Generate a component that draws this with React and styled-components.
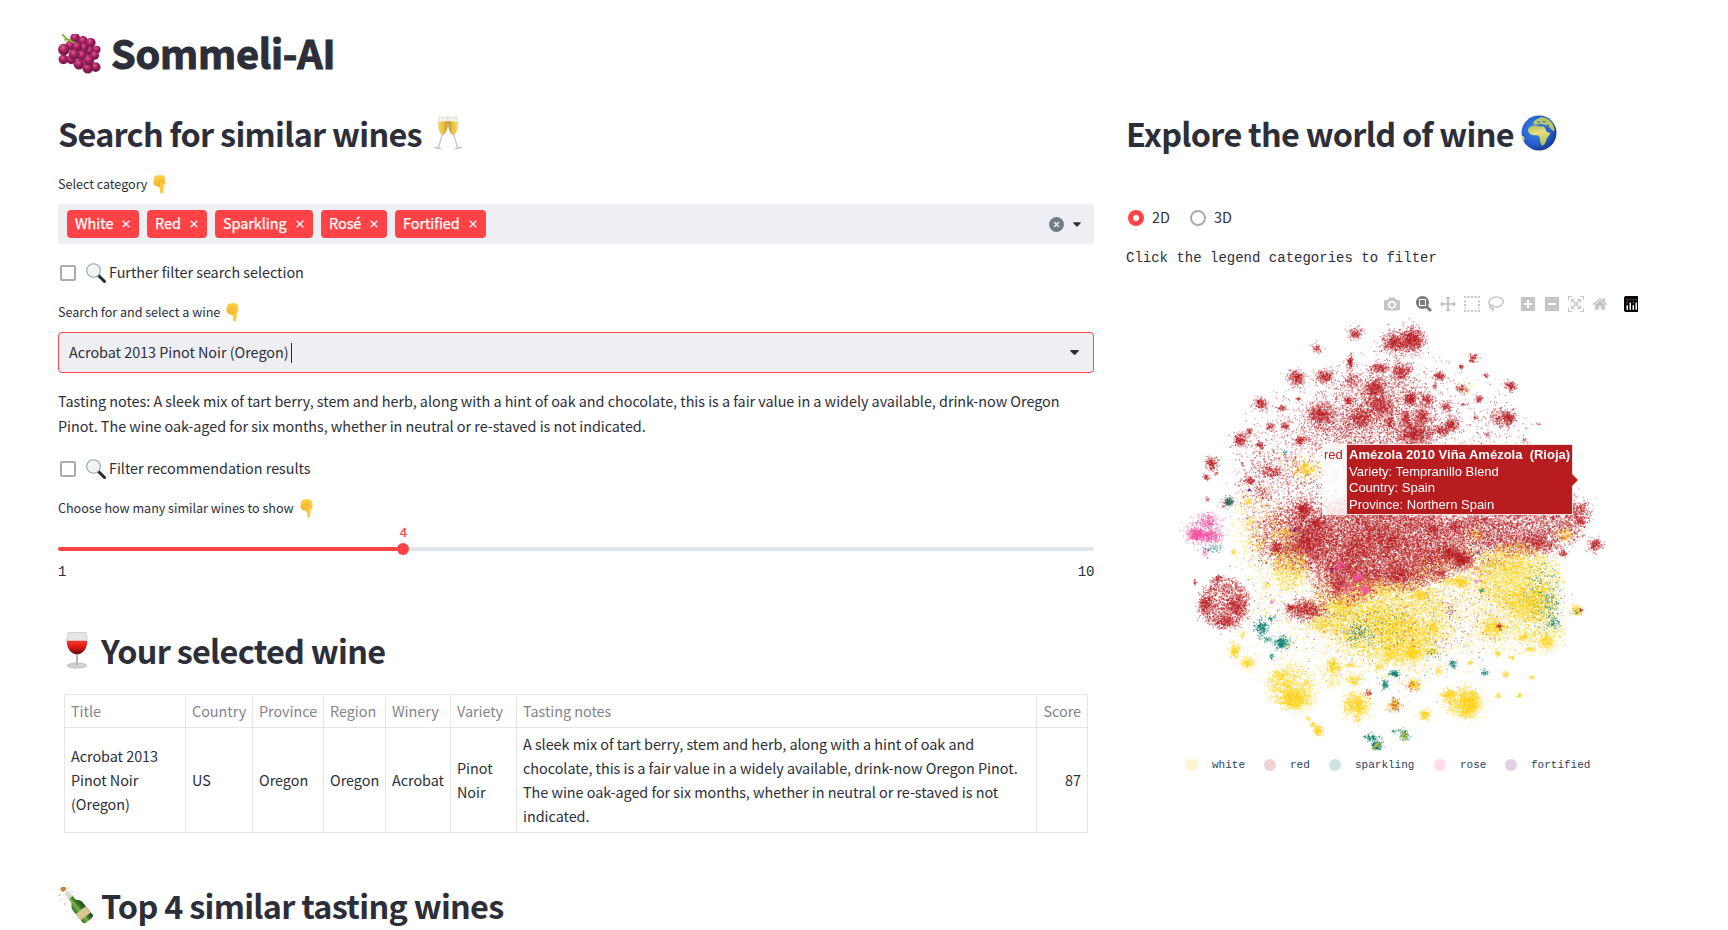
import React, { useEffect, useRef } from "react";
import styled, { createGlobalStyle } from "styled-components";

const sans = `"Noto Sans CJK SC", "Noto Sans", sans-serif`;
const mono = `"Liberation Mono", monospace`;
const ink = "#2c2e39";
const accent = "#ff4346";
const field = "#eeeff4";

const Global = createGlobalStyle`
  * { box-sizing: border-box; }
  body { margin: 0; background: #fff; color: ${ink}; font-family: ${sans}; font-size: 14.4px; line-height: 24px; letter-spacing: -0.03px; overflow: hidden; }
`;

const Page = styled.main`
  width: 1728px;
  height: 930px;
  overflow: hidden;
  padding: 25px 84px 0 58px;
`;
const Columns = styled.div`
  display: grid;
  grid-template-columns: 1036px 518px;
  column-gap: 32px;
  margin-top: 31px;
`;
const Column = styled.section`
  display: flex;
  flex-direction: column;
  min-width: 0;
`;
const Title = styled.h1`
  margin: 0;
  height: 53px;
  display: flex;
  align-items: center;
  gap: 8px;
  font-size: 39.6px;
  line-height: 53px;
  font-weight: 700;
  letter-spacing: -0.2px;
  -webkit-text-stroke: 1.1px ${ink};
  white-space: nowrap;

  svg {
    margin-top: 4px;
  }
`;
const Heading = styled.h2`
  margin: ${(p) => p.$top || 0}px 0 0;
  padding-left: ${(p) => p.$indent || 0}px;
  height: 48px;
  display: flex;
  align-items: center;
  gap: ${(p) => p.$gap || 8}px;
  font-size: 32.4px;
  line-height: 48px;
  font-weight: 700;
  letter-spacing: -0.72px;
  white-space: nowrap;
`;
const Label = styled.label`
  margin: 17px 0 ${(p) => p.$bottom ?? 10}px;
  height: 20px;
  line-height: 20px;
  font-size: 12.6px;
  display: flex;
  align-items: center;
  gap: 6px;
`;
const MultiSelect = styled.div`
  height: 40px;
  border-radius: 4px;
  background: ${field};
  display: flex;
  align-items: center;
  gap: 8px;
  padding: 0 13px 0 9px;
`;
const Tag = styled.span`
  height: 28px;
  width: ${(p) => p.$w}px;
  padding: 0 9px 0 8px;
  border-radius: 4px;
  background: ${accent};
  color: #fff;
  display: flex;
  align-items: center;
  justify-content: space-between;
  line-height: 26px;
  -webkit-text-stroke: 0.25px #fff;
`;
const TagText = styled.span`
  height: 28px;
`;
const FieldActions = styled.span`
  margin-left: auto;
  display: flex;
  align-items: center;
  gap: 9px;
`;
const CheckRow = styled.label`
  margin-top: ${(p) => p.$top}px;
  height: 24px;
  line-height: 22px;
  padding-left: 2px;
  display: flex;
  align-items: center;
`;
const Box = styled.span`
  width: 16px;
  height: 16px;
  border: 2px solid #a9abb0;
  border-radius: 2px;
  margin-right: 10px;
`;
const CheckText = styled.span`
  margin-left: 3px;
  height: 24px;
`;
const Select = styled.div`
  height: 41px;
  border: 1px solid ${accent};
  border-radius: 4px;
  background: ${field};
  display: flex;
  align-items: center;
  padding: 0 14px 0 10px;
`;
const SelectText = styled.span`
  height: 24px;
  line-height: 22px;
`;
const Cursor = styled.span`
  width: 1px;
  height: 20px;
  margin-left: 2px;
  background: ${ink};
`;
const Notes = styled.p`
  margin: 15px 0 0;
  line-height: 25px;
  width: 1020px;
`;
const Slider = styled.div`
  margin-top: 7px;
  display: flex;
  flex-direction: column;
`;
const SliderValue = styled.div`
  width: 691px;
  height: 18px;
  line-height: 17px;
  text-align: center;
  color: ${accent};
  font-family: ${mono};
  font-size: 13px;
  -webkit-text-stroke: 0.3px ${accent};
`;
const Track = styled.div`
  height: 12px;
  display: flex;
  align-items: center;
`;
const Filled = styled.span`
  width: 339px;
  height: 4px;
  border-radius: 4px 0 0 4px;
  background: ${accent};
`;
const Thumb = styled.span`
  width: 12px;
  height: 12px;
  border-radius: 50%;
  background: ${accent};
`;
const Rest = styled.span`
  flex: 1;
  height: 4px;
  border-radius: 0 4px 4px 0;
  background: #e1e5ed;
`;
const Ticks = styled.div`
  margin: 9px 0 -1px;
  height: 16px;
  line-height: 16px;
  display: flex;
  justify-content: space-between;
  font-family: ${mono};
  font-size: 14px;
  letter-spacing: -0.3px;
`;
const Table = styled.table`
  margin: 20px 0 0 6px;
  width: 1023px;
  border-collapse: collapse;
  table-layout: fixed;
  line-height: 24px;
`;
const Cell = styled.td`
  border: 1px solid #e6e6e9;
  padding: 4px 6px;
  text-align: ${(p) => (p.$right ? "right" : "left")};
  font-weight: 400;
  color: ${(p) => (p.$head ? "#83848c" : ink)};
  white-space: ${(p) => (p.$head ? "nowrap" : "normal")};
`;
const Radios = styled.div`
  margin-top: 49px;
  padding-left: 2px;
  height: 24px;
  display: flex;
  align-items: center;
`;
const Radio = styled.span`
  width: 16px;
  height: 16px;
  border-radius: 50%;
  border: ${(p) => (p.$on ? `5px solid ${accent}` : "2px solid #a9abb0")};
  background: #fff;
`;
const RadioText = styled.span`
  width: 38px;
  padding-left: 8px;
  margin-right: 8px;
  height: 24px;
  line-height: 22px;
`;
const Hint = styled.div`
  margin-top: 18px;
  height: 20px;
  line-height: 20px;
  font-family: ${mono};
  font-size: 14px;
  letter-spacing: 0;
  white-space: pre;
`;
const Plot = styled.div`
  position: relative;
  margin-top: 28px;
  display: flex;
  flex-direction: column;
`;
const ModeBar = styled.div`
  height: 16px;
  margin-right: 6px;
  display: flex;
  justify-content: flex-end;
  align-items: center;
  gap: 16px;
`;
const ModeGroup = styled.div`
  display: flex;
  align-items: center;
  gap: 8px;
`;
const Cloud = styled.canvas`
  width: 460px;
  height: 446px;
  margin: -2px 0 0 34px;
`;
const Hover = styled.div`
  position: absolute;
  left: 196px;
  top: 148px;
  height: 71px;
  display: flex;
  letter-spacing: 0;
  font: 13px/16.7px "Liberation Sans", Arial, sans-serif;
`;
const HoverName = styled.span`
  width: 24px;
  padding: 3px 0 0 2px;
  background: rgba(255, 255, 255, 0.8);
  color: #b71c1c;
  white-space: nowrap;
`;
const HoverBody = styled.div`
  width: 227px;
  border: 1px solid #f6dede;
  background: #b71c1f;
  color: #fff;
  padding: 2px 0 0 2px;
  white-space: pre;
`;
const HoverArrow = styled.span`
  align-self: center;
  margin-left: -1px;
  border: 6px solid transparent;
  border-left-color: #b71c1f;
  border-right: 0;
`;
const Legend = styled.div`
  display: flex;
  align-items: center;
  height: 16px;
  margin: 1px 0 0 60px;
  letter-spacing: 0;
  font: 11px/18px "Liberation Mono", "Courier New", monospace;
  color: #2a3f5f;
`;
const LegendItem = styled.span`
  width: ${(p) => p.$w}px;
  display: flex;
  align-items: center;
  gap: 14px;
  &::before {
    content: "";
    width: 12px;
    height: 12px;
    border-radius: 50%;
    background: ${(p) => p.$c};
  }
`;

const Cross = () => (
  <svg width="8" height="8" viewBox="0 0 8 8"><path d="M.7.7l6.6 6.6M7.3.7L.7 7.3" stroke="#fff" strokeWidth="1.25" /></svg>
);
const Caret = ({ w }) => (
  <svg width={w} height="5" viewBox="0 0 9 5"><path d="M.3 0h8.4v.9L5.2 4.7H3.8L.3.9z" fill={ink} /></svg>
);
const Clear = () => (
  <svg width="15" height="15" viewBox="0 0 15 15"><circle cx="7.5" cy="7.5" r="7.4" fill="#747986" /><path d="M5 5l5 5M10 5l-5 5" stroke="#f0f2f6" strokeWidth="1.4" /></svg>
);

const grapes = [[17, 4, 5], [25, 7, 5], [33, 9, 5], [5, 26, 5], [12, 12, 5], [32, 17, 5], [39, 16, 4], [26, 14, 5], [19, 13, 5], [13, 26, 5], [5.5, 16, 6], [24, 22, 5.5], [37, 22, 4.5], [16, 21, 5.5], [21, 31, 5.5], [38, 34, 5], [30, 35, 5.5], [31, 27, 5.5]];
const Grapes = () => (
  <svg width="45" height="40" viewBox="0 0 45 41">
    <defs><radialGradient id="grape" cx=".4" cy=".32"><stop offset="0" stopColor="#dc5f97" /><stop offset=".5" stopColor="#b42867" /><stop offset="1" stopColor="#7d194b" /></radialGradient></defs>
    {grapes.map(([x, y, r], i) => <circle key={i} cx={x} cy={y} r={r} fill="url(#grape)" />)}
    <path d="M4 0c2 4 5 6.500 13 9M6 6.500c3-2 6-1 9 2" fill="none" stroke="#7fae35" strokeWidth="1.800" />
  </svg>
);
const Flutes = () => (
  <svg width="30" height="34" viewBox="0 0 30 34">
    <defs><linearGradient id="fizz" x2="1"><stop offset="0" stopColor="#f4d968" /><stop offset=".55" stopColor="#e9c23c" /><stop offset="1" stopColor="#ba932e" /></linearGradient></defs>
    {["", "matrix(-1 0 0 1 30 0)"].map((t) => (
      <g key={t} transform={t}>
        <path d="M6 .8l8.700.8c.7 8-.5 15.500-5 17.800C5.200 17 4.200 9 6 .8z" fill="#f1f2ea" stroke="#c9c9bd" strokeWidth=".5" />
        <path d="M5.500 6l9.200-1c.2 7-1.300 12.500-5 14C6 17 4.700 12 5.500 6z" fill="url(#fizz)" />
        <path d="M9.300 18.500L5.500 31.500" stroke="#bfc4c6" strokeWidth="1.200" />
        <path d="M.6 31.500c3-.8 6-.4 9 1.200-3 .7-6.500.4-9-1.200z" fill="#c3c8ca" />
      </g>
    ))}
  </svg>
);
const Hand = () => (
  <svg width="13" height="19" viewBox="0 0 13 19">
    <path d="M2.300 1.200C4 .2 8.500 0 10.300.8c1.200.7 1.900 2.600 2.100 5 .2 2-.3 3.600-1.500 4.400-.2 2.600-.5 5.300-.9 7.300-.3 1.400-2.400 1.400-2.700 0L6.500 11.800c-.8.7-2 .5-2.400-.5-1 .5-2.100 0-2.300-1.200C.7 9.600.3 8.500.6 7.300.2 5.200 1 2.300 2.300 1.200z" fill="#ffc83d" />
    <path d="M2.200 6.300c-.6 1-.6 2.500-.2 3.600M4.300 6.800c-.5 1.300-.6 2.800-.2 4.300M6.600 7.200c-.4 1.400-.4 3-.1 4.400M5 5.500c2-.6 4-.2 4.700 1.700" fill="none" stroke="#e09a24" strokeWidth=".7" />
  </svg>
);
const Lens = () => (
  <svg width="20" height="20" viewBox="0 0 20 20">
    <path d="M12 12l6.500 6.500" stroke="#292b2d" strokeWidth="3" strokeLinecap="round" />
    <circle cx="7.500" cy="7.500" r="6.800" fill="#f1f4f5" stroke="#95a2a8" strokeWidth="1.100" />
    <path d="M3.500 7a4 4 0 0 1 4-4" stroke="#fff" strokeWidth="1.500" fill="none" />
  </svg>
);
const Glass = () => (
  <svg width="22" height="37" viewBox="0 0 22 37">
    <defs><linearGradient id="wine" x2="0" y2="1"><stop offset="0" stopColor="#f2382a" /><stop offset=".45" stopColor="#dd1a14" /><stop offset=".8" stopColor="#8d0f0e" /><stop offset="1" stopColor="#5a0c0c" /></linearGradient></defs>
    <ellipse cx="11" cy="33.500" rx="9.800" ry="2.600" fill="#d2d2d2" stroke="#a5a5a5" strokeWidth=".6" />
    <path d="M11 21v12" stroke="#bdb5b5" strokeWidth="2" />
    <path d="M2 .6h18c1.500 6 2 12-1.500 17-2 3-4.500 5-7.500 5s-5.500-2-7.500-5C0 12.500.500 6.500 2 .6z" fill="#e6e6e6" stroke="#bcbcbc" strokeWidth=".6" />
    <path d="M.9 8.800h20.200c.1 8-4.100 13.500-10.100 13.500S.8 16.800.9 8.800z" fill="url(#wine)" />
  </svg>
);
const Bottle = () => (
  <svg width="36" height="36" viewBox="0 0 36 36">
    <defs><linearGradient id="green" x2="1"><stop offset="0" stopColor="#2e6b1f" /><stop offset=".4" stopColor="#7fb34a" /><stop offset=".6" stopColor="#3b7a28" /><stop offset="1" stopColor="#1f4a18" /></linearGradient></defs>
    <g transform="rotate(-39 18 18)">
      <path d="M16 8h5v4c0 3 3.800 4 3.800 8v16.500c0 2.500-12.600 2.500-12.600 0V20c0-4 3.800-5 3.800-8z" fill="url(#green)" />
      <path d="M16 2h5v7h-5z" fill="#ddd9c8" />
      <path d="M12.200 25h12.600v8H12.200z" fill="#dcc493" />
      <rect x="15.500" y="-5" width="5.500" height="5" rx="2" fill="#c68448" />
    </g>
    <g fill="#cdbb91"><circle cx="1.500" cy="8" r=".9" /><circle cx="4" cy="12" r=".7" /><circle cx="7" cy="17" r=".9" /><circle cx="10" cy="1" r=".7" /><circle cx="14" cy="5" r=".8" /><circle cx="2" cy="14" r=".6" /></g>
  </svg>
);
const Globe = () => (
  <svg width="36" height="36" viewBox="0 0 36 36">
    <defs>
      <radialGradient id="sea" cx=".4" cy=".4" r=".62"><stop offset="0" stopColor="#3f86e8" /><stop offset=".65" stopColor="#2561d0" /><stop offset="1" stopColor="#173c93" /></radialGradient>
      <linearGradient id="land" x2=".3" y2="1"><stop offset="0" stopColor="#a5bd55" /><stop offset=".45" stopColor="#e6df83" /><stop offset="1" stopColor="#b9c553" /></linearGradient>
    </defs>
    <circle cx="18" cy="18" r="17.500" fill="url(#sea)" />
    <path d="M7 15c.5-3 4-5 8-4.500 1.500 1 4.500 1.300 8 1l2.800 5.500 3.500 1c-.6 2.500-3.500 4.500-4 6.700-.5 3-2.500 6-4.300 5.800-1.800-1.500-1.800-4.500-2.100-7.300-.6-2-1.500-3-3.400-3C12.500 20.500 7.500 20 7 15z" fill="url(#land)" />
    <path d="M12 8.800c0-2 2-3.800 4-4.800l4-1.800c5 0 8.500 2.300 11 5.800 2 3.200 2.500 5.500 2.300 8.500L31 15l-2.500-2.500-2.500-2-3-1-3 .5-2.500-1-2.500 1-3-1.200z" fill="#b6c865" />
    <path d="M16.500 7.500l2-1M19 9l2.500 1M21.500 6.500l3 .5M26 10l2 1" stroke="#2865c7" strokeWidth="1.100" fill="none" />
    <path d="M.8 20.500c1.600.3 3 2 2.700 4l-1 1.500C1.500 25 .8 22.500.8 20.500z" fill="#d6da55" />
  </svg>
);

const modePaths = {
  camera: [1000, "m500 450c-83 0-150-67-150-150 0-83 67-150 150-150 83 0 150 67 150 150 0 83-67 150-150 150z m400 150h-120c-16 0-34 13-39 29l-31 93c-6 15-23 28-40 28h-340c-16 0-34-13-39-28l-31-94c-6-15-23-28-40-28h-120c-55 0-100-45-100-100v-450c0-55 45-100 100-100h800c55 0 100 45 100 100v450c0 55-45 100-100 100z m-400-550c-138 0-250 112-250 250 0 138 112 250 250 250 138 0 250-112 250-250 0-138-112-250-250-250z m365 380c-19 0-35 16-35 35 0 19 16 35 35 35 19 0 35-16 35-35 0-19-16-35-35-35z"],
  zoom: [1000, "m1000-25l-250 251c40 63 63 138 63 218 0 224-182 406-407 406-224 0-406-182-406-406s183-406 407-406c80 0 155 22 218 62l250-250 125 125z m-812 250l0 438 437 0 0-438-437 0z m62 375l313 0 0-312-313 0 0 312z"],
  pan: [1000, "m1000 350l-187 188 0-125-250 0 0 250 125 0-188 187-187-187 125 0 0-250-250 0 0 125-188-188 186-187 0 125 252 0 0-250-125 0 187-188 188 188-125 0 0 250 250 0 0-126 187 188z"],
  plus: [875, "m1 787l0-875 875 0 0 875-875 0z m687-500l-187 0 0-187-125 0 0 187-188 0 0 125 188 0 0 187 125 0 0-187 187 0 0-125z"],
  minus: [875, "m0 788l0-876 875 0 0 876-875 0z m688-500l-500 0 0 125 500 0 0-125z"],
  auto: [1000, "m250 850l-187 0-63 0 0-62 0-188 63 0 0 188 187 0 0 62z m688 0l-188 0 0-62 188 0 0-188 62 0 0 188 0 62-62 0z m-875-938l0 188-63 0 0-188 0-62 63 0 187 0 0 62-187 0z m875 188l0-188-188 0 0-62 188 0 62 0 0 62 0 188-62 0z m-125 188l-1 0-93-94-156 156 156 156 92-93 2 0 0 250-250 0 0-2 93-92-156-156-156 156 94 92 0 2-250 0 0-250 0 0 93 93 157-156-157-156-93 94 0 0 0-250 250 0 0 0-94 93 156 157 156-157-93-93 0 0 250 0 0 250z"],
  home: [928.6, "m786 296v-267q0-15-11-26t-25-10h-214v214h-143v-214h-214q-15 0-25 10t-11 26v267q0 1 0 2t0 2l321 264 321-264q1-1 1-4z m124 39l-34-41q-5-5-12-6h-2q-7 0-12 3l-386 322-386-322q-7-4-13-4-7 2-12 7l-35 41q-4 5-3 13t6 12l401 334q18 15 42 15t43-15l136-114v109q0 8 5 13t13 5h107q8 0 13-5t5-13v-227l122-102q5-5 6-12t-4-13z"],
};
const ModeIcon = ({ name, color = "#c6c6c6" }) => {
  const [w, d] = modePaths[name];
  return <svg width="16" height="16" viewBox={`0 0 ${w} 1000`}><path d={d} fill={color} transform="matrix(1 0 0 -1 0 850)" /></svg>;
};
const BoxSelect = () => (
  <svg width="16" height="16" viewBox="0 0 16 16"><path d="M0 1h16M0 15h16" stroke="#c6c6c6" strokeWidth="2" strokeDasharray="2 1.500" /><path d="M1 4.500v8M15 4.500v8" stroke="#c6c6c6" strokeWidth="2" strokeDasharray="2 1.500" /></svg>
);
const Lasso = () => (
  <svg width="16" height="16" viewBox="0 0 16 16" fill="none" stroke="#c6c6c6" strokeWidth="1.500"><path d="M3.500 10.500C1.500 9.500.7 8 .8 6.400 1.100 3.300 4.500 1 8.500 1s6.800 2.200 6.700 5c-.2 3-3.500 5-7.200 5-1.500 0-2.500-.2-3.500-.7" /><circle cx="3.600" cy="10.800" r="1.800" /><path d="M4.500 12.300c.8 1 .8 2-.3 3" /></svg>
);
const PlotlyMark = () => (
  <svg width="14" height="16" viewBox="0 0 14 16"><path d="M2 0h12v16H2a2 2 0 0 1-2-2V2a2 2 0 0 1 2-2z" fill="#000" /><g fill="#fff"><rect x="2.500" y="9" width="1.500" height="5" rx=".7" /><rect x="5.500" y="6.500" width="1.500" height="7.500" rx=".7" /><rect x="8.500" y="9" width="1.500" height="5" rx=".7" /><rect x="11.500" y="6.500" width="1.500" height="7.500" rx=".7" /></g><g fill="#f27ab0"><circle cx="3.200" cy="3.700" r=".6" /><circle cx="6.200" cy="3.700" r=".6" /><circle cx="3.200" cy="6.700" r=".6" /></g><g fill="#4fd3e5"><circle cx="9.200" cy="3.700" r=".6" /><circle cx="12.200" cy="3.700" r=".6" /><circle cx="9.200" cy="6.700" r=".6" /></g></svg>
);

const palette = { r: "183,28,34", y: "255,209,20", t: "0,121,107", p: "240,80,160", f: "106,27,132" };
/* Broad regions, filled evenly: colour, centre x, centre y, radius x, radius y, points */
const fields = [
  ["y", 690, 880, 480, 220, 2000], ["r", 690, 480, 440, 340, 2400], ["t", 700, 820, 520, 360, 420], ["p", 650, 650, 480, 380, 350], ["f", 720, 740, 500, 350, 80],
  ["y", 700, 700, 420, 200, 500],
  ["r", 650, 300, 190, 120, 1400], ["r", 630, 370, 220, 80, 1200], ["r", 350, 560, 125, 140, 750], ["r", 660, 700, 270, 135, 9000], ["r", 600, 640, 250, 90, 2300], ["r", 690, 760, 190, 85, 2600],
  ["r", 1080, 650, 190, 85, 3400], ["r", 400, 690, 130, 100, 1500], ["r", 950, 700, 160, 90, 1200], ["y", 940, 820, 200, 110, 900],
  ["y", 1070, 800, 135, 100, 2200], ["y", 1110, 880, 95, 60, 1000], ["y", 1130, 955, 85, 55, 500], ["y", 680, 930, 200, 120, 4400], ["y", 560, 890, 130, 90, 1100], ["y", 740, 1000, 75, 70, 800], ["y", 390, 770, 55, 75, 700],
  ["r", 195, 880, 75, 78, 1300], ["r", 550, 820, 100, 70, 900], ["y", 300, 660, 90, 130, 300], ["y", 395, 1130, 75, 70, 800], ["y", 910, 1180, 58, 48, 500],
  ["r", 390, 430, 170, 120, 350], ["r", 1100, 600, 190, 110, 400], ["y", 650, 1070, 210, 60, 260], ["t", 640, 960, 130, 70, 180], ["t", 1150, 860, 60, 110, 250], ["y", 1060, 990, 170, 50, 160], ["r", 750, 900, 350, 130, 450],
];
/* Tight clusters with a gaussian falloff, same columns */
const clusters = [
  ["r", 585, 70, 10, 9, 150], ["r", 758, 88, 16, 15, 650], ["r", 700, 100, 16, 13, 350], ["r", 730, 95, 26, 20, 350], ["r", 470, 115, 8, 7, 60], ["r", 572, 155, 5, 9, 130], ["r", 410, 203, 11, 11, 300], ["r", 495, 200, 12, 10, 250], ["r", 575, 210, 12, 11, 130], ["r", 660, 175, 14, 7, 200], ["r", 725, 185, 14, 12, 350], ["r", 645, 235, 17, 14, 500], ["r", 840, 200, 8, 6, 130], ["r", 825, 228, 3, 6, 25], ["r", 905, 235, 10, 6, 80], ["r", 940, 145, 6, 7, 80], ["r", 905, 170, 3, 3, 30], ["r", 977, 197, 4, 3, 25], ["r", 1052, 228, 8, 8, 130], ["r", 565, 272, 6, 7, 100], ["r", 660, 285, 25, 15, 650], ["r", 750, 265, 10, 9, 260], ["r", 800, 268, 10, 9, 150], ["r", 860, 290, 9, 7, 90], ["r", 958, 268, 5, 6, 60], ["r", 912, 283, 4, 2, 15], ["r", 415, 268, 4, 2, 20],
  ["r", 300, 282, 11, 9, 180], ["r", 365, 293, 6, 5, 60], ["r", 480, 315, 18, 15, 600], ["r", 600, 325, 20, 15, 500], ["r", 785, 320, 12, 12, 250], ["r", 740, 325, 7, 10, 140], ["r", 688, 335, 7, 9, 110], ["r", 765, 372, 25, 16, 800], ["r", 845, 362, 12, 9, 180], ["r", 875, 345, 11, 11, 250], ["r", 1015, 322, 12, 14, 150], ["r", 1045, 325, 11, 11, 290], ["r", 945, 322, 4, 4, 18], ["r", 980, 372, 5, 4, 20], ["r", 1130, 342, 6, 2, 10], ["r", 1090, 390, 4, 3, 12], ["r", 332, 350, 6, 5, 60], ["r", 377, 348, 6, 5, 70], ["r", 242, 390, 10, 10, 210], ["r", 268, 365, 4, 5, 45], ["r", 300, 405, 6, 6, 65], ["r", 420, 392, 8, 7, 110], ["r", 155, 460, 9, 10, 180], ["r", 140, 502, 4, 5, 45], ["r", 170, 490, 3, 3, 14], ["r", 248, 463, 3, 3, 12], ["r", 142, 568, 3, 3, 14], ["r", 335, 485, 16, 8, 170], ["r", 270, 512, 7, 5, 80], ["r", 305, 545, 8, 12, 60], ["r", 430, 600, 12, 13, 330], ["r", 470, 640, 10, 8, 150], ["r", 205, 575, 7, 7, 80], ["t", 205, 575, 7, 7, 80],
  ["r", 440, 685, 20, 18, 400], ["r", 650, 670, 40, 20, 400], ["r", 820, 655, 10, 10, 100], ["r", 885, 650, 15, 9, 180], ["r", 1255, 605, 17, 15, 300], ["r", 1265, 635, 10, 7, 80], ["r", 1305, 705, 9, 9, 190], ["r", 1130, 695, 28, 15, 350], ["r", 410, 715, 35, 14, 400], ["r", 350, 715, 9, 9, 150], ["r", 905, 748, 15, 13, 600], ["r", 865, 730, 12, 11, 230], ["r", 1210, 730, 7, 5, 60], ["r", 720, 790, 15, 14, 180], ["r", 580, 730, 18, 15, 150], ["r", 135, 885, 10, 16, 260], ["r", 230, 890, 14, 17, 350], ["r", 195, 935, 15, 10, 220], ["r", 175, 805, 8, 5, 60], ["r", 105, 816, 2, 4, 20], ["r", 440, 900, 28, 15, 750], ["r", 390, 892, 6, 4, 60], ["r", 535, 825, 12, 14, 300], ["r", 845, 792, 8, 6, 70],
  ["p", 110, 675, 14, 10, 450], ["p", 145, 635, 15, 12, 220], ["p", 155, 680, 14, 10, 260], ["p", 130, 660, 25, 18, 160], ["p", 137, 730, 5, 7, 35], ["p", 540, 768, 6, 6, 70], ["p", 595, 802, 7, 6, 120], ["p", 615, 840, 8, 7, 130], ["p", 565, 830, 22, 22, 220], ["p", 690, 165, 35, 20, 25], ["p", 335, 875, 4, 3, 15], ["p", 955, 812, 8, 2, 14], ["t", 160, 715, 13, 7, 50],
  ["y", 440, 478, 17, 11, 220], ["y", 430, 460, 35, 25, 80], ["y", 265, 575, 9, 6, 50], ["y", 265, 640, 10, 10, 60], ["y", 920, 235, 9, 10, 20], ["y", 950, 672, 12, 10, 60], ["y", 1215, 675, 12, 10, 100], ["y", 370, 670, 15, 10, 90], ["y", 290, 700, 14, 14, 60], ["y", 222, 728, 5, 5, 30], ["y", 318, 825, 6, 6, 40], ["y", 905, 815, 11, 9, 230], ["y", 875, 812, 10, 6, 70], ["y", 780, 855, 10, 8, 150], ["y", 1000, 950, 20, 16, 550], ["r", 1017, 950, 4, 5, 35], ["y", 1160, 995, 11, 13, 220], ["y", 1093, 980, 6, 5, 70], ["y", 1250, 900, 8, 8, 120], ["r", 1265, 900, 3, 3, 18], ["y", 818, 952, 7, 7, 110], ["y", 225, 1022, 8, 11, 180], ["y", 262, 1058, 9, 8, 160], ["y", 248, 975, 5, 6, 30],
  ["y", 405, 1165, 20, 17, 800], ["y", 370, 1115, 20, 20, 250], ["y", 520, 1070, 12, 11, 220], ["y", 510, 1115, 16, 12, 70], ["y", 580, 1110, 10, 8, 120], ["y", 590, 1185, 18, 17, 700], ["y", 595, 1230, 4, 3, 20], ["y", 760, 1125, 9, 8, 170], ["r", 758, 1126, 9, 8, 25], ["y", 705, 1185, 9, 10, 140], ["r", 705, 1185, 8, 10, 55], ["r", 625, 1150, 5, 6, 35], ["y", 925, 1180, 17, 19, 850], ["y", 865, 1155, 11, 9, 200], ["y", 795, 1215, 8, 8, 160], ["y", 475, 1263, 7, 7, 150], ["y", 460, 1243, 4, 4, 35], ["y", 443, 1227, 4, 3, 18], ["y", 757, 1030, 11, 11, 260], ["y", 690, 1040, 20, 12, 200], ["y", 815, 1025, 10, 5, 90], ["y", 1012, 1030, 5, 5, 50], ["y", 1037, 1095, 5, 5, 45], ["y", 1115, 1103, 4, 4, 25], ["y", 1078, 1156, 4, 4, 35], ["y", 1015, 1157, 4, 3, 28], ["y", 930, 1058, 5, 4, 28], ["y", 1055, 1043, 5, 3, 28], ["y", 835, 1082, 5, 7, 35], ["y", 658, 1070, 7, 5, 50], ["y", 572, 1065, 8, 4, 45], ["y", 1110, 1018, 8, 4, 50],
  ["y", 690, 950, 40, 30, 700], ["y", 1060, 780, 30, 25, 400], ["y", 1110, 890, 25, 15, 400], ["y", 540, 890, 15, 12, 150], ["y", 480, 945, 20, 10, 180],
  ["t", 305, 953, 9, 11, 190], ["t", 335, 927, 6, 5, 35], ["t", 320, 988, 9, 4, 30], ["t", 365, 998, 10, 8, 230], ["t", 335, 1040, 4, 4, 25], ["t", 965, 843, 4, 4, 22], ["t", 878, 1063, 5, 6, 60], ["t", 975, 1088, 5, 4, 40], ["t", 703, 1092, 7, 4, 100], ["t", 675, 1124, 5, 7, 75], ["t", 635, 1282, 12, 5, 90], ["t", 650, 1308, 7, 7, 210], ["y", 650, 1308, 6, 5, 35], ["t", 735, 1275, 7, 8, 110], ["y", 735, 1275, 7, 8, 45], ["t", 705, 1263, 6, 2, 15], ["t", 600, 970, 18, 14, 100], ["t", 1165, 875, 12, 16, 60], ["t", 1183, 938, 9, 8, 60], ["t", 375, 428, 4, 4, 15], ["t", 815, 1028, 8, 4, 15], ["t", 1250, 905, 8, 6, 15],
  ["f", 870, 905, 5, 14, 25], ["f", 515, 777, 2, 3, 15], ["f", 403, 660, 3, 3, 18], ["f", 270, 540, 4, 2, 18], ["f", 955, 730, 3, 3, 15],
];

function drawCloud(canvas) {
  const ctx = canvas.getContext("2d");
  let seed = 20130;
  const rand = () => {
    seed = (seed + 0x6d2b79f5) | 0;
    let t = Math.imul(seed ^ (seed >>> 15), 1 | seed);
    t = (t + Math.imul(t ^ (t >>> 7), 61 | t)) ^ t;
    return ((t ^ (t >>> 14)) >>> 0) / 4294967296;
  };
  ctx.clearRect(0, 0, 460, 446);
  const dot = (c, x, y, a, s) => {
    if (y / 3 > 440) return;
    ctx.fillStyle = `rgba(${palette[c]},${a})`;
    ctx.fillRect(x / 3 - s / 2, y / 3 - s / 2, s, s);
  };
  fields.forEach(([c, x, y, rx, ry, n]) => {
    for (let i = 0; i < n; i++) {
      const q = Math.sqrt(rand()) * (0.78 + rand() * 0.34);
      const t = rand() * Math.PI * 2;
      dot(c, x + rx * q * Math.cos(t), y + ry * q * Math.sin(t), 0.25 + rand() * 0.45, 1.2);
    }
  });
  clusters.forEach(([c, x, y, rx, ry, n]) => {
    for (let i = 0; i < n; i++) {
      const m = 1.06 * Math.sqrt(-2 * Math.log(rand() + 1e-6));
      const t = rand() * Math.PI * 2;
      dot(c, x + rx * m * Math.cos(t), y + ry * m * Math.sin(t), 0.3 + rand() * 0.35, 1.2);
    }
  });
}

const tags = [["White", 72], ["Red", 60], ["Sparkling", 98], ["Rosé", 66], ["Fortified", 91]];
const columns = [["Title", 121], ["Country", 67], ["Province", 71], ["Region", 62], ["Winery", 65], ["Variety", 66], ["Tasting notes", 520], ["Score", 51]];
const wine = ["Acrobat 2013 Pinot Noir (Oregon)", "US", "Oregon", "Oregon", "Acrobat", "Pinot Noir", "A sleek mix of tart berry, stem and herb, along with a hint of oak and chocolate, this is a fair value in a widely available, drink-now Oregon Pinot. The wine oak-aged for six months, whether in neutral or re-staved is not indicated.", "87"];
const legend = [["white", "#fff4cc", 78], ["red", "#f1d2d2", 65], ["sparkling", "#cce4e1", 105], ["rose", "#ffdcec", 71], ["fortified", "#e1d1e4", 90]];

export default function App() {
  const cloud = useRef(null);
  useEffect(() => drawCloud(cloud.current), []);
  return (
    <Page>
      <Global />
      <Title><Grapes /><span>Sommeli-AI</span></Title>
      <Columns>
        <Column>
          <Heading $gap={11}><span>Search for similar wines</span><Flutes /></Heading>
          <Label>Select category<Hand /></Label>
          <MultiSelect>
            {tags.map(([t, w]) => <Tag key={t} $w={w}><TagText>{t}</TagText><Cross /></Tag>)}
            <FieldActions><Clear /><Caret w={8} /></FieldActions>
          </MultiSelect>
          <CheckRow $top={17}><Box /><Lens /><CheckText>Further filter search selection</CheckText></CheckRow>
          <Label>Search for and select a wine<Hand /></Label>
          <Select>
            <SelectText>{wine[0]}</SelectText><Cursor />
            <FieldActions><Caret w={9} /></FieldActions>
          </Select>
          <Notes>Tasting notes: {wine[6]}</Notes>
          <CheckRow $top={19}><Box /><Lens /><CheckText>Filter recommendation results</CheckText></CheckRow>
          <Label $bottom={0}>Choose how many similar wines to show<Hand /></Label>
          <Slider>
            <SliderValue>4</SliderValue>
            <Track><Filled /><Thumb /><Rest /></Track>
            <Ticks><span>1</span><span>10</span></Ticks>
          </Slider>
          <Heading $top={47} $gap={13} $indent={8}><Glass /><span>Your selected wine</span></Heading>
          <Table>
            <colgroup>{columns.map(([c, w]) => <col key={c} width={w} />)}</colgroup>
            <thead><tr>{columns.map(([c], i) => <Cell as="th" key={c} $head $right={i === 7}>{c}</Cell>)}</tr></thead>
            <tbody><tr>{wine.map((v, i) => <Cell key={i} $right={i === 7}>{v}</Cell>)}</tr></tbody>
          </Table>
          <Heading $top={48} $gap={7}><Bottle /><span>Top 4 similar tasting wines</span></Heading>
        </Column>
        <Column>
          <Heading $gap={7}><span>Explore the world of wine</span><Globe /></Heading>
          <Radios><Radio $on /><RadioText>2D</RadioText><Radio /><RadioText>3D</RadioText></Radios>
          <Hint>Click the legend categories to filter</Hint>
          <Plot>
            <ModeBar>
              <ModeIcon name="camera" />
              <ModeGroup><ModeIcon name="zoom" color="#7c7c7c" /><ModeIcon name="pan" /><BoxSelect /><Lasso /></ModeGroup>
              <ModeGroup><ModeIcon name="plus" /><ModeIcon name="minus" /><ModeIcon name="auto" /><ModeIcon name="home" /></ModeGroup>
              <PlotlyMark />
            </ModeBar>
            <Cloud ref={cloud} width={460} height={446} />
            <Hover>
              <HoverName>red</HoverName>
              <HoverBody><b>Amézola 2010 Viña Amézola  (Rioja)</b>{"\nVariety: Tempranillo Blend\nCountry: Spain\nProvince: Northern Spain"}</HoverBody>
              <HoverArrow />
            </Hover>
            <Legend>{legend.map(([t, c, w]) => <LegendItem key={t} $c={c} $w={w}>{t}</LegendItem>)}</Legend>
          </Plot>
        </Column>
      </Columns>
    </Page>
  );
}
